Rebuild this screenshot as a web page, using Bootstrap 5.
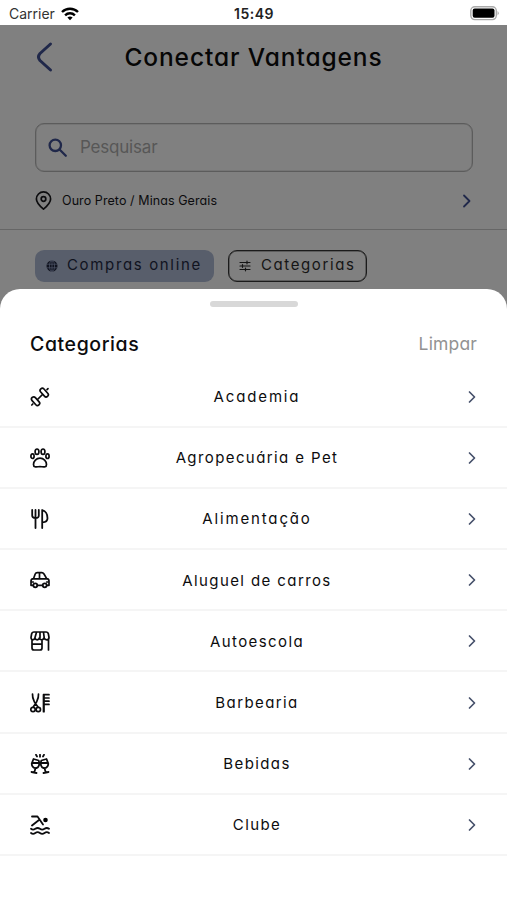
<!DOCTYPE html>
<html lang="pt-BR">
<head>
<meta charset="utf-8">
<meta name="viewport" content="width=device-width, initial-scale=1">
<title>Conectar Vantagens</title>
<link href="https://cdn.jsdelivr.net/npm/bootstrap@5.3.0/dist/css/bootstrap.min.css" rel="stylesheet">
<style>
body{font-family:Inter,"Liberation Sans",sans-serif;font-feature-settings:"cv11";background:#808080;color:#0c0c0e;height:900px;overflow:hidden}
svg{display:block;flex:none}
.ln{fill:none;stroke:currentColor;stroke-linecap:round;stroke-linejoin:round}
.status{height:25px;font-size:14px;background:#fff;color:#333;font-feature-settings:normal;padding:2px 8px 0 9px}
.status .side{width:160px;gap:6px}
.status .clock{font-weight:600;font-size:14px;letter-spacing:.5px;color:#222}
.backdrop-page{height:264px;background:#808080}
.app-head{height:64px}
.app-head h1{font-size:24.5px;font-weight:500;letter-spacing:.9px;line-height:30px;color:#060606;padding-bottom:1px}
.side-slot{width:20px}
.navy{color:#20284a}
.search{height:49px;margin:34px 34px 0 35px;border:1px solid #5c5c5c;box-shadow:inset 0 0 0 .5px #6a6a6a;border-radius:9px;color:#575757;font-size:17px;padding-left:12px;font-feature-settings:normal;letter-spacing:-.2px}
.search span{padding-top:1px}
.place{height:58px;padding:0 34px 0 35px;font-size:12.5px;letter-spacing:.08px;border-bottom:1px solid #666}
.place span{padding:2px 0 0 10px}
.chips{padding:20px 0 0 35px;gap:14px}
.pill{height:32px;border-radius:9px;font-size:15px;border:1px solid transparent}
.pill span{padding-bottom:2px}
.pill-fill{width:179px;background:#585e6b;color:#10131f;letter-spacing:1.65px;padding-left:10px;gap:9px}
.pill-line{width:139px;border-color:#1b1b1b;box-shadow:inset 0 0 0 .5px #3a3a3a;color:#151515;letter-spacing:1.6px;padding-left:10px;gap:10px}
.sheet{height:611px;background:#fff;border-radius:20px 20px 0 0}
.grip{width:88px;height:6px;border-radius:3px;background:#d8d8d8;margin:12px auto 0}
.sheet-head{height:60px;padding:15px 30px 0}
.sheet-head h2{font-size:19.5px;font-weight:500;letter-spacing:.6px}
.sheet-head span{font-size:17.5px;letter-spacing:.15px;color:#929292}
.cat{height:61.1px;border-bottom:2px solid #f5f5f5;padding:1px 30px 0 30px;font-size:15px;letter-spacing:1.4px}
.cat span{padding:1px 0 0 7px}
.cat .wide{letter-spacing:1.85px}
.cat .chev{color:#46516b;width:20px}
</style>
</head>
<body>
<header class="status d-flex align-items-center justify-content-between">
  <div class="side d-flex align-items-center"><span>Carrier</span>
    <svg width="18" height="14" viewBox="0 0 18 14"><g fill="none" stroke="#000" stroke-width="2.4"><path d="M1 5a11.5 11.5 0 0 1 16 0"/><path d="M4.1 8.3a7 7 0 0 1 9.8 0"/></g><path d="M6.4 10.6a3.8 3.8 0 0 1 5.2 0L9 13.3z"/></svg>
  </div>
  <span class="clock">15:49</span>
  <div class="side d-flex justify-content-end">
    <svg width="30" height="16" viewBox="0 0 30 16"><rect x="1.8" y=".8" width="25.5" height="12.8" rx="4" fill="#fff" stroke="#aaa" stroke-width="1.4"/><rect x="3.7" y="2.6" width="21.8" height="9.2" rx="2" fill="#000"/><path d="M28.6 5q2 2.2 0 4.4z" fill="#999"/></svg>
  </div>
</header>
<main class="backdrop-page">
  <div class="app-head d-flex align-items-center justify-content-between px-4 mx-2">
    <div class="side-slot navy"><svg width="22" height="32" viewBox="0 0 22 32"><path class="ln" stroke-width="3" d="M18.5 3 8 12.5Q5 16 8 19.5L18.5 29"/></svg></div>
    <h1 class="m-0">Conectar Vantagens</h1>
    <div class="side-slot"></div>
  </div>
  <div class="search d-flex align-items-center gap-2">
    <svg class="navy" width="20" height="20" viewBox="0 0 20 20"><g class="ln" stroke-width="2.3"><circle cx="7.3" cy="7.3" r="5.7"/><path d="m11.8 11.8 6 6"/></g></svg>
    <span class="ms-1">Pesquisar</span>
  </div>
  <div class="place d-flex align-items-center">
    <svg width="17" height="20" viewBox="0 0 17 20"><g class="ln" stroke-width="1.7"><path d="M8.5 18.2C4 14.4 1.4 11.2 1.4 8a7.1 7.1 0 0 1 14.2 0c0 3.2-2.6 6.4-7.1 10.2z"/><circle cx="8.5" cy="8" r="2.3"/></g></svg>
    <span class="flex-fill">Ouro Preto / Minas Gerais</span>
    <svg class="navy" width="12" height="16" viewBox="0 0 12 16"><path class="ln" stroke-width="1.8" d="m3 2.5 5.5 5.5L3 13.5"/></svg>
  </div>
  <div class="d-flex chips">
    <div class="pill pill-fill d-flex align-items-center"><svg width="12" height="12" viewBox="0 0 12 12"><circle cx="6" cy="6" r="5.5" fill="currentColor"/><g fill="none" stroke="#50576a" stroke-width=".7"><ellipse cx="6" cy="6" rx="2.5" ry="5.2"/><path d="M1 4.2h10M1 7.8h10M6 .5v11"/></g></svg><span>Compras online</span></div>
    <div class="pill pill-line d-flex align-items-center"><svg width="12" height="12" viewBox="0 0 12 12"><path class="ln" stroke-width="1.2" d="M1 2.5h10M1 6h10M1 9.5h10M8 1.2v2.6M3.5 4.7v2.6M6.5 8.2v2.6"/></svg><span>Categorias</span></div>
  </div>
</main>
<section class="sheet overflow-hidden">
  <div class="grip"></div>
  <div class="sheet-head d-flex align-items-center justify-content-between"><h2 class="m-0">Categorias</h2><span>Limpar</span></div>
  <div class="cat d-flex align-items-center justify-content-between">
    <svg width="20" height="20" viewBox="0 0 20 20"><g class="ln" stroke-width="1.7"><rect x="-2.2" y="-5" width="4.4" height="10" rx="2.2" transform="translate(14.2 5.6) rotate(-42)"/><rect x="-2.2" y="-5" width="4.4" height="10" rx="2.2" transform="translate(5.6 14.2) rotate(-42)"/><path d="m7.5 12.5 5-5M17 2.7l1-1M1.8 18l1-1"/></g></svg>
    <span class="wide">Academia</span><svg class="chev" height="16" viewBox="0 0 20 16"><path class="ln" stroke-width="1.7" d="m12.5 3 5 5-5 5"/></svg></div>
  <div class="cat d-flex align-items-center justify-content-between">
    <svg width="20" height="20" viewBox="0 0 20 20"><g class="ln" stroke-width="1.7"><ellipse cx="7" cy="3.7" rx="1.9" ry="2.7"/><ellipse cx="13" cy="3.7" rx="1.9" ry="2.7"/><ellipse cx="2.5" cy="8.2" rx="1.6" ry="2.3"/><ellipse cx="17.5" cy="8.2" rx="1.6" ry="2.3"/><path d="M10 10.2c3.7 0 6.5 2.8 6.5 6.200 0 3.600-3.800 2.200-6.500 2.200s-6.500 1.400-6.500-2.200c0-3.400 2.800-6.200 6.500-6.200z"/></g></svg>
    <span>Agropecuária e Pet</span><svg class="chev" height="16" viewBox="0 0 20 16"><path class="ln" stroke-width="1.7" d="m12.5 3 5 5-5 5"/></svg></div>
  <div class="cat d-flex align-items-center justify-content-between">
    <svg width="20" height="20" viewBox="0 0 20 20"><g class="ln" stroke-width="1.8"><path d="M2.2 1v5.500Q2.200 9 5.500 9t3.300-2.500V1M5.500 1v18M12.200 19V1c3.500 1 5.300 4.800 5.300 8.300 0 2.500-1.500 4-5 4"/></g></svg>
    <span class="wide">Alimentação</span><svg class="chev" height="16" viewBox="0 0 20 16"><path class="ln" stroke-width="1.7" d="m12.5 3 5 5-5 5"/></svg></div>
  <div class="cat d-flex align-items-center justify-content-between">
    <svg width="20" height="20" viewBox="0 0 20 20"><g class="ln" stroke-width="1.7"><path d="M3.300 15.300H1V11q0-2 2.500-2.300L5.200 4q.6-1.300 2-1.300h4.600q1.300 0 2.200 1.300l2.700 4.700Q19 9 19 11v4.300h-2.300M7.300 15.300h5.400M3.500 8.800h13M9.500 3v5.500M1.300 12h2M16.700 12h2"/><circle cx="5.3" cy="15.3" r="2"/><circle cx="14.7" cy="15.3" r="2"/></g></svg>
    <span>Aluguel de carros</span><svg class="chev" height="16" viewBox="0 0 20 16"><path class="ln" stroke-width="1.7" d="m12.5 3 5 5-5 5"/></svg></div>
  <div class="cat d-flex align-items-center justify-content-between">
    <svg width="20" height="20" viewBox="0 0 20 20"><g class="ln" stroke-width="1.7"><path d="M4 1h12q2 0 2.400 2l.6 3.500q0 2.300-2.200 2.300T14 6.800q-.5 2-2.300 2T9.500 6.800q-.5 2-2.300 2T5 6.800q-.5 2-2.200 2T1 6.500L1.600 3Q2 1 4 1zM6.500 1.300 5 6.500M10 1.300v5.200M13.500 1.300l.7 5.200M2 9v8q0 2 2 2h6q2 0 2-2V9M2.300 13.200H12M18.500 8.500V19"/></g></svg>
    <span>Autoescola</span><svg class="chev" height="16" viewBox="0 0 20 16"><path class="ln" stroke-width="1.7" d="m12.5 3 5 5-5 5"/></svg></div>
  <div class="cat d-flex align-items-center justify-content-between">
    <svg width="20" height="20" viewBox="0 0 20 20"><g class="ln" stroke-width="1.7"><path d="M2.500 1c-.3 4 1 6 2.200 8.500L8 14M8.500 1c.3 4-1 6-2.200 8.500L3.200 14"/><circle cx="3" cy="16.5" r="2.2"/><circle cx="8.300" cy="16.500" r="2.200"/><path d="M19 1.700h-5v17M14 5h5M14 8.200h5M14 11.400h5M13.500 1.700v17"/></g></svg>
    <span>Barbearia</span><svg class="chev" height="16" viewBox="0 0 20 16"><path class="ln" stroke-width="1.7" d="m12.5 3 5 5-5 5"/></svg></div>
  <div class="cat d-flex align-items-center justify-content-between">
    <svg width="20" height="20" viewBox="0 0 20 20"><g class="ln" stroke-width="1.8"><path d="m3.500 5 5.200 1.500c1.200 3.800.2 7-2.200 7.500-3 .6-5-2-4.700-4.700zM16.500 5l-5.200 1.500c-1.200 3.800-.2 7 2.200 7.500 3 .6 5-2 4.700-4.700zM2.500 9h6.300M11.200 9h6.300M5.500 14l-1.200 4.500M14.500 14l1.200 4.500M1.500 18l5 1M18.500 18l-5 1M10 .8v2M6 .8l1 1.700M14 .8l-1 1.700"/></g></svg>
    <span>Bebidas</span><svg class="chev" height="16" viewBox="0 0 20 16"><path class="ln" stroke-width="1.7" d="m12.5 3 5 5-5 5"/></svg></div>
  <div class="cat d-flex align-items-center justify-content-between">
    <svg width="20" height="20" viewBox="0 0 20 20"><g class="ln" stroke-width="1.8"><path d="M2 1.500h5.500l5.500 8M9 5l-7 5.500M1 13.800q2 1.600 4.300 0 2.300-1.600 4.600 0 2.300 1.600 4.600 0 2.300-1.600 4.500 0M1 18q2 1.600 4.300 0 2.300-1.600 4.600 0 2.300 1.600 4.600 0 2.300-1.600 4.500 0"/></g><circle cx="15.5" cy="5" r="2.3"/></svg>
    <span>Clube</span><svg class="chev" height="16" viewBox="0 0 20 16"><path class="ln" stroke-width="1.7" d="m12.5 3 5 5-5 5"/></svg></div>
</section>
<script src="https://cdn.jsdelivr.net/npm/bootstrap@5.3.0/dist/js/bootstrap.bundle.min.js"></script>
</body>
</html>
